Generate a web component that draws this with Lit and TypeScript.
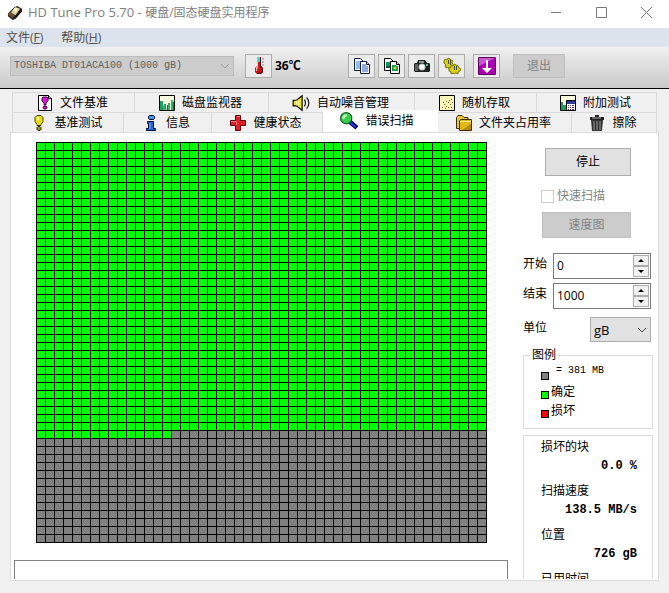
import { LitElement, html, css, svg, nothing, TemplateResult } from "lit";
import { customElement, property, state } from "lit/decorators.js";
import { classMap } from "lit/directives/class-map.js";

const icons: Record<string, TemplateResult> = {
  app: svg`<path d="M1 9 8 2l3-1 5 3v3l-7 8-3 1-5-4z" fill="#2a241c"/><path d="m4 8 5-6 5 2-5 7z" fill="#e3cfa0"/><circle cx="9" cy="5" r="2" fill="#fff3cf"/><path d="m1 10 5 4 2-3-5-4z" fill="#6b5230"/><path d="m9 14 6-7v-2l-6 7z" fill="#111"/>`,
  thermo: svg`<path d="M7 0h4v9l2 2v4l-2 2H7l-2-2v-4l2-2z" fill="#d01018"/><path d="M7 0h3v5H7z" fill="#48d8c8"/><path d="M7 5h1v6l-1 1v2H6v-3l1-2z" fill="#ffb8b8"/><path d="M10 1h1v8l2 2v4l-2 2H7v-1h3l2-2v-2l-2-2z" fill="#480008"/><path d="M12 2h2M12 5h2M12 8h2" stroke="#888"/>`,
  copy: svg`<path d="M1.500 1.500h6l3 3v9h-9z" fill="#fff" stroke="#102040"/><path d="M3 5h5M3 7h5M3 9h5M3 11h5" stroke="#2878d0"/><path d="M7.500 4.500h6l3 3v9h-9z" fill="#fff" stroke="#102040"/><path d="M13.500 4.500v3h3" fill="#bcd4f0" stroke="#102040"/><path d="M9 8h4M9 10h6M9 12h6M9 14h6" stroke="#2858b8"/>`,
  copyimg: svg`<path d="M1.500 1.500h6l3 3v9h-9z" fill="#fff" stroke="#000"/><path d="M3 5h4v6H3z" fill="#0a9c50"/><path d="M3 9h4v2H3z" fill="#085a38"/><path d="M7.500 4.500h6l3 3v9h-9z" fill="#fff" stroke="#000"/><path d="M13.500 4.500v3h3" fill="#ddd" stroke="#000"/><path d="M9 8h4v1h2v5H9z" fill="#0a9c50"/><circle cx="12" cy="11" r="1.500" fill="#d8d830"/>`,
  camera: svg`<path d="M5 3h7l2 3h2l1 1v7l-1 1H2l-1-1V7l1-1h2z" fill="#1c201e"/><path d="M6 4h5v2H6z" fill="#8a8f8c"/><path d="M2 7h3v7H2z" fill="#59645e"/><circle cx="9" cy="10" r="3.500" fill="#b8c0bc"/><circle cx="9" cy="10" r="2.500" fill="#fff"/><path d="M13 7h2v2h-2z" fill="#50b890"/>`,
  gears: svg`<path d="m1 4 1-2 2 1 1-2 2 1 1 1 2 1-1 2 2 2-2 1v2H7L6 12l-1-2-2 1-1-2 1-1-2-2z" fill="#d6d01c" stroke="#7c7600"/><path d="m6 11 2-1V8l2 1 1-2 2 1 2 1 1 2 2 1-1 2-2 1v2l-2-1-2 1-1-1-2 1v-2l-2-1z" fill="#d6d01c" stroke="#7c7600"/><path d="M5.500 3v4M7.500 3v5M11.500 9v4M13.500 9v4" stroke="#4c5030"/>`,
  down: svg`<rect width="18" height="18" rx="1" fill="#5c005c"/><path d="M1 1h16v16H1z" fill="#a800b0"/><path d="M1 1h16L1 9z" fill="#c858d0"/><path d="M8 3h2v8h4l-5 5-5-5h4z" fill="#fff"/>`,
  filebench: svg`<path d="M1.500.500h10l3 3v12h-13z" fill="#fff" stroke="#000"/><path d="M11.500.500v3h3" fill="#ccc" stroke="#000"/><path d="M6 2h4l1 1v3L9 8v2H7V8L5 6V3z" fill="#d818d0" stroke="#500050"/><path d="M7 11h2l1 1v1l-1 1H7l-1-1v-1z" fill="#d818d0" stroke="#500050"/>`,
  monitor: svg`<path d="M.500.500h15v15H.500z" fill="#fffde0" stroke="#000"/><path d="M1 6h3v9H1zM5 9h2v6H5z" fill="#18a060"/><path d="M8 10h3v5H8zM13 7h2v8h-2z" fill="#106880"/><path d="M9 8h2v7H9zM12 5h2v10h-2zM4 11h2v4H4z" fill="#28b868"/>`,
  sound: svg`<path d="M1 5.500h3l5-4v13l-5-4H1z" fill="#eadc28" stroke="#000"/><path d="M4 6v4M6 5v6" stroke="#fff9a0"/><path d="M11 5q2 3 0 6M13 3q4 5 0 10" fill="none" stroke="#111"/>`,
  random: svg`<path d="M.500.500h15v15H.500z" fill="#fff8b8" stroke="#000"/><path d="M3 12h1v1H3zM5 9h1v1H5zM7 11h1v1H7zM9 7h1v1H9zM11 9h1v1h-1zM12 4h1v1h-1zM10 5h1v1h-1zM4 7h1v1H4zM12 12h1v1h-1zM9 12h1v1H9zM7 6h1v1H7zM6 13h1v1H6zM13 7h1v1h-1z" fill="#775820"/>`,
  extra: svg`<path d="M.500.500h15v15H.500z" fill="#fffde0" stroke="#000"/><path d="M1 7h2v8H1zM3 10h3v5H3z" fill="#18a060"/><path d="M6.500 5.500h9v10h-9z" fill="#fff" stroke="#000"/><path d="M7 6h8v3H7z" fill="#3038a0"/><path d="M8 10h1v1H8zM10 10h1v1h-1zM12 10h2v1h-2zM8 12h1v1H8zM10 12h1v1h-1zM12 12h2v1h-2zM8 14h1v1H8zM10 14h1v1h-1zM12 14h2v1h-2z" fill="#536"/>`,
  bulb: svg`<path d="M6 .500h4l2 2v4l-2 3v1H6v-1l-2-3v-4z" fill="#e6dc18" stroke="#4c4800"/><path d="M6 2h2v3H6z" fill="#fffcb0"/><path d="M7 11.500h2l1 1v2l-1 1H7l-1-1v-2z" fill="#a09808" stroke="#222"/>`,
  info: svg`<path d="M6.500.500h4l1 1v2l-1 1h-4l-1-1v-2z" fill="#39a0f0" stroke="#003"/><path d="M4.500 6.500h6v7h2v2h-9v-2h2v-5h-1z" fill="#1a68d8" stroke="#003"/><path d="M7 8v6" stroke="#6cc0ff"/>`,
  cross: svg`<path d="M5.500.500h5v5h5v5h-5v5h-5v-5h-5v-5h5z" fill="#e02028" stroke="#5c0808"/><path d="M6.500 10V6.500M7 1.500h3M1 6.500h5" stroke="#ff8080"/>`,
  search: svg`<path d="m8 8 7 6" stroke="#000050" stroke-width="4"/><path d="m9 9 5 4.500" stroke="#2038d0" stroke-width="2"/><circle cx="5.500" cy="5.500" r="5" fill="#3ccc50" stroke="#125c20"/><path d="M3 6q0-3 3-3" fill="none" stroke="#c0ffc0" stroke-width="2"/>`,
  folder: svg`<path d="M.500 2.500 2 .500h4l2 2h4v11H.500z" fill="#e8c838" stroke="#3c2c00"/><path d="M3.500 5.500 5 4.500h10.500v11h-12z" fill="#e2b818" stroke="#3c2c00"/><path d="M4 6.500h11" stroke="#fff0a0"/><path d="M6 15h9V9z" fill="#b48808"/>`,
  trash: svg`<path d="M1 2h5V0h4v2h5v3H1z" fill="#222"/><path d="M3 3h9" stroke="#aaa"/><path d="M2 5h12l-1 11H3z" fill="#333"/><path d="M5 6v9M8 6v9M11 6v9" stroke="#999"/>`,
};

const icon = (name: string, size = 16, box = size) =>
  html`<svg width=${size} height=${size} viewBox="0 0 ${box} ${box}" aria-hidden="true">${icons[name]}</svg>`;

const chevron = html`<svg class="chevron" width="10" height="6" viewBox="0 0 10 6" aria-hidden="true">
  <path d="m1 1 4 4 4-4" fill="none" stroke="currentColor" />
</svg>`;

const base = css`
  * {
    box-sizing: border-box;
  }
  button,
  input,
  select {
    font: inherit;
    color: inherit;
    margin: 0;
    padding: 0;
    border-radius: 0;
  }
  svg {
    display: block;
    flex: none;
  }
  .select {
    position: relative;
    display: flex;
  }
  .select select {
    appearance: none;
    width: 100%;
    opacity: 1;
  }
  .chevron {
    position: absolute;
    right: 4px;
    top: 0;
    bottom: 0;
    margin: auto;
    pointer-events: none;
  }
`;

@customElement("block-map")
class BlockMap extends LitElement {
  @property({ type: Number }) columns = 50;
  @property({ type: Number }) rows = 50;
  @property({ type: Number }) scanned = 0;

  static styles = css`
    :host {
      display: block;
    }
    svg {
      display: block;
      max-width: 100%;
      height: auto;
    }
    .pending {
      fill: #808080;
    }
    .ok {
      fill: #00ff00;
    }
    .lines {
      stroke: #000;
      shape-rendering: crispEdges;
    }
  `;

  render() {
    const cw = 9;
    const ch = 8;
    const w = this.columns * cw + 1;
    const h = this.rows * ch + 1;
    const full = Math.floor(this.scanned / this.columns);
    const rest = this.scanned % this.columns;
    let d = "";
    for (let c = 0; c <= this.columns; c++) d += `M${c * cw + 0.5} 0V${h}`;
    for (let r = 0; r <= this.rows; r++) d += `M0 ${r * ch + 0.5}H${w}`;
    return html`<svg width=${w} height=${h} viewBox="0 0 ${w} ${h}" role="img" aria-label="错误扫描">
      <rect class="pending" width=${w} height=${h} />
      <rect class="ok" width=${w} height=${full * ch} />
      <rect class="ok" y=${full * ch} width=${rest * cw} height=${ch} />
      <path class="lines" d=${d} />
    </svg>`;
  }
}

@customElement("spin-field")
class SpinField extends LitElement {
  @property() label = "";
  @property({ type: Number }) value = 0;

  static styles = [
    base,
    css`
      :host {
        display: flex;
        align-items: center;
        justify-content: space-between;
      }
      label {
        padding-bottom: 4px;
      }
      .field {
        display: flex;
        width: 98px;
        height: 26px;
        padding: 1px;
        border: 1px solid #7a7a7a;
        background: #fff;
      }
      input {
        flex: 1;
        min-width: 0;
        border: 0;
        padding-left: 2px;
        background: none;
        outline: none;
      }
      .spin {
        display: grid;
        grid-template-rows: 1fr 1fr;
        width: 16px;
      }
      .spin button {
        display: grid;
        place-items: center;
        border: 1px solid #acacac;
        background: #f0f0f0;
      }
    `,
  ];

  private step(delta: number) {
    this.value = Math.max(0, this.value + delta);
  }

  render() {
    return html`
      <label for="value">${this.label}</label>
      <div class="field">
        <input id="value" type="text" inputmode="numeric" .value=${String(this.value)} />
        <div class="spin">
          <button aria-label="+" @click=${() => this.step(1)}>
            <svg width="6" height="3" viewBox="0 0 6 3"><path d="m0 3 3-3 3 3z" /></svg>
          </button>
          <button aria-label="-" @click=${() => this.step(-1)}>
            <svg width="6" height="3" viewBox="0 0 6 3"><path d="m0 0 3 3 3-3z" /></svg>
          </button>
        </div>
      </div>
    `;
  }
}

const topTabs: [string, string][] = [
  ["filebench", "文件基准"],
  ["monitor", "磁盘监视器"],
  ["sound", "自动噪音管理"],
  ["random", "随机存取"],
  ["extra", "附加测试"],
];
const bottomTabs: [string, string][] = [
  ["bulb", "基准测试"],
  ["info", "信息"],
  ["cross", "健康状态"],
  ["search", "错误扫描"],
  ["folder", "文件夹占用率"],
  ["trash", "擦除"],
];
const tools: [string, string][] = [
  ["copy", "复制文本"],
  ["copyimg", "复制图像"],
  ["camera", "截图"],
  ["gears", "选项"],
  ["down", "保存"],
];
const legend: [string, string][] = [
  ["pending", "= 381 MB"],
  ["ok", "确定"],
  ["bad", "损坏"],
];
const stats: [string, string][] = [
  ["损坏的块", "0.0 %"],
  ["扫描速度", "138.5 MB/s"],
  ["位置", "726 gB"],
  ["已用时间", ""],
];

@customElement("app-root")
class AppRoot extends LitElement {
  @state() private tab = "search";

  static styles = [
    base,
    css`
      :host {
        display: flex;
        flex-direction: column;
        height: 100vh;
        overflow: hidden;
        background: #f0f0f0;
        color: #000;
        font: 12px/16px "Open Sans", "Noto Sans CJK SC", sans-serif;
      }
      .title {
        display: flex;
        align-items: center;
        flex: none;
        height: 28px;
        padding: 0 0 4px 7px;
        gap: 6px;
        background: #fff;
        color: #808080;
      }
      .title h1 {
        flex: 1;
        margin: 0;
        font: inherit;
      }
      .name {
        font-size: 13px;
      }
      .controls {
        display: flex;
      }
      .controls button {
        display: grid;
        place-items: center;
        width: 45px;
        height: 24px;
        border: 0;
        background: none;
      }
      .menu {
        display: flex;
        align-items: center;
        flex: none;
        height: 19px;
        padding-left: 6px;
        gap: 18px;
        background: #dce3ec;
        color: #505050;
      }
      .menu button {
        border: 0;
        background: none;
      }
      .toolbar {
        display: flex;
        align-items: center;
        flex: none;
        height: 42px;
        padding: 0 10px 4px;
        gap: 3px;
        border-bottom: 1px solid #000;
        background: linear-gradient(#f0f0f0, #cacaca);
      }
      .drive {
        width: 224px;
        margin-right: 8px;
        color: #a0a0a0;
      }
      .drive select {
        height: 20px;
        padding-left: 3px;
        border: 1px solid #bcbcbc;
        background: #cccccc;
        color: #606060;
        font: 10px "Liberation Mono", monospace;
      }
      .tool {
        display: grid;
        place-items: center;
        width: 27px;
        height: 24px;
        border: 1px solid #acacac;
        background: #ebebeb;
      }
      .temp {
        width: 70px;
        font-weight: 700;
      }
      .tool:nth-last-child(2) {
        margin: 0 10px 0 5px;
      }
      .push {
        border: 1px solid #adadad;
        background: #e1e1e1;
      }
      .push:disabled {
        border-color: #bfbfbf;
        background: #cccccc;
        color: #838383;
      }
      .exit {
        width: 52px;
        height: 24px;
      }
      .book {
        display: flex;
        flex-direction: column;
        flex: 1;
        min-height: 0;
        padding: 3px 10px 12px;
      }
      .tabs {
        display: grid;
        flex: none;
        height: 20px;
        margin: 0 2px;
        border-left: 1px solid #d9d9d9;
      }
      .upper {
        grid-template-columns: 122fr 134fr 146fr 122fr 120fr;
      }
      .lower {
        grid-template-columns: 111fr 88fr 111fr 115fr 134fr 85fr;
      }
      .tab {
        display: flex;
        align-items: center;
        justify-content: center;
        gap: 7px;
        padding-right: 2px;
        border: 1px solid #d9d9d9;
        border-width: 1px 1px 0 0;
        background: #f0f0f0;
        white-space: nowrap;
      }
      .tab.active {
        position: relative;
        margin-top: -2px;
        padding: 0 6px 1px 0;
        border-color: #fff;
        background: #fff;
      }
      .panel {
        display: flex;
        flex: 1;
        min-height: 0;
        justify-content: space-between;
        gap: 15px;
        padding: 9px 5px 1px 3px;
        border: 1px solid #dcdcdc;
        background: #fff;
      }
      .scan {
        display: flex;
        flex-direction: column;
        justify-content: space-between;
        flex: 1;
        min-width: 0;
      }
      .map {
        padding: 0 21px 0 22px;
      }
      .status {
        flex: none;
        height: 19px;
        border: 1px solid #808080;
        border-bottom: 0;
      }
      .side {
        display: flex;
        flex-direction: column;
        flex: none;
        width: 130px;
        padding-top: 6px;
        overflow: hidden;
      }
      .side > * {
        flex: none;
      }
      .stop {
        width: 86px;
        height: 28px;
        margin-left: 22px;
      }
      .quick {
        display: flex;
        align-items: center;
        gap: 3px;
        height: 16px;
        margin: 12px 0 8px 18px;
        color: #838383;
      }
      .quick input {
        appearance: none;
        width: 13px;
        height: 13px;
        border: 1px solid #cccccc;
        background: #fff;
      }
      .speed {
        width: 89px;
        height: 26px;
        margin: 0 0 15px 19px;
      }
      .range {
        display: grid;
        gap: 4px;
        padding-right: 2px;
      }
      .unit {
        display: flex;
        align-items: center;
        justify-content: space-between;
        margin: 8px 2px 5px 0;
      }
      .unit label {
        padding-bottom: 4px;
      }
      .unit .select {
        width: 61px;
        color: #505050;
      }
      .unit select {
        height: 25px;
        padding-left: 3px;
        border: 1px solid #adadad;
        background: #e1e1e1;
        color: #000;
        font-size: 13px;
      }
      fieldset {
        min-width: 0;
        height: 82px;
        margin: 0;
        padding: 0 0 0 17px;
        border: 1px solid #dcdcdc;
      }
      legend {
        margin-left: -11px;
        padding: 0 2px;
      }
      .key {
        display: flex;
        align-items: flex-end;
        gap: 2px;
        height: 19px;
      }
      .key span {
        line-height: 19px;
      }
      .key .mono {
        padding-left: 5px;
        font: 10px/22px "Liberation Mono", monospace;
      }
      .swatch {
        width: 8px;
        height: 8px;
        margin-bottom: 2px;
        border: 1px solid #000;
      }
      .pending {
        background: #808080;
      }
      .ok {
        background: #00ff00;
      }
      .bad {
        background: #ff0000;
      }
      .stats {
        margin: 6px 0 0;
        padding: 1px 15px 0 17px;
        border: 1px solid #dcdcdc;
      }
      .stats dt {
        height: 20px;
        line-height: 20px;
      }
      .stats dd {
        height: 24px;
        margin: 0;
        text-align: right;
        font: bold 12px/18px "Liberation Mono", monospace;
      }
    `,
  ];

  private tabRow(list: [string, string][], cls: string) {
    return html`<div class="tabs ${cls}" role="tablist">
      ${list.map(
        ([id, text]) => html`<button
          class=${classMap({ tab: true, active: this.tab === id })}
          role="tab"
          aria-selected=${this.tab === id}
          @click=${() => (this.tab = id)}
        >
          ${icon(id, id === "search" || id === "sound" ? 18 : 16, 16)}<span>${text}</span>
        </button>`
      )}
    </div>`;
  }

  render() {
    return html`
      <header class="title">
        ${icon("app", 15, 16)}
        <h1><span class="name">HD Tune Pro 5.70 - </span>硬盘/固态硬盘实用程序</h1>
        <div class="controls">
          ${[
            ["最小化", "M0 5.500h10"],
            ["最大化", "M.500.500h10v10H.500z"],
            ["关闭", "m0 0 11 11M11 0 0 11"],
          ].map(
            ([name, d]) => html`<button aria-label=${name}>
              <svg width="11" height="11" viewBox="0 0 11 11"><path d=${d} fill="none" stroke="#777" /></svg>
            </button>`
          )}
        </div>
      </header>
      <nav class="menu">
        <button>文件(<u>F</u>)</button>
        <button>帮助(<u>H</u>)</button>
      </nav>
      <div class="toolbar">
        <div class="select drive">
          <select disabled aria-label="驱动器">
            <option>TOSHIBA DT01ACA100 (1000 gB)</option>
          </select>
          ${chevron}
        </div>
        <button class="tool" aria-label="温度">${icon("thermo", 18)}</button>
        <span class="temp">36℃</span>
        ${tools.map(([id, name]) => html`<button class="tool" aria-label=${name}>${icon(id, 18)}</button>`)}
        <button class="push exit" disabled>退出</button>
      </div>
      <main class="book">
        ${this.tabRow(topTabs, "upper")} ${this.tabRow(bottomTabs, "lower")}
        <section class="panel">
          <div class="scan">
            <div class="map"><block-map .scanned=${1815}></block-map></div>
            <div class="status"></div>
          </div>
          <aside class="side">
            <button class="push stop">停止</button>
            <label class="quick"><input type="checkbox" disabled />快速扫描</label>
            <button class="push speed" disabled>速度图</button>
            <div class="range">
              <spin-field label="开始" .value=${0}></spin-field>
              <spin-field label="结束" .value=${1000}></spin-field>
            </div>
            <div class="unit">
              <label for="unit">单位</label>
              <div class="select">
                <select id="unit">
                  <option>gB</option>
                </select>
                ${chevron}
              </div>
            </div>
            <fieldset>
              <legend>图例</legend>
              ${legend.map(
                ([kind, text]) => html`<div class="key">
                  <i class="swatch ${kind}"></i><span class=${kind === "pending" ? "mono" : nothing}>${text}</span>
                </div>`
              )}
            </fieldset>
            <dl class="stats">
              ${stats.map(([name, value]) => html`<dt>${name}</dt><dd>${value}</dd>`)}
            </dl>
          </aside>
        </section>
      </main>
    `;
  }
}
